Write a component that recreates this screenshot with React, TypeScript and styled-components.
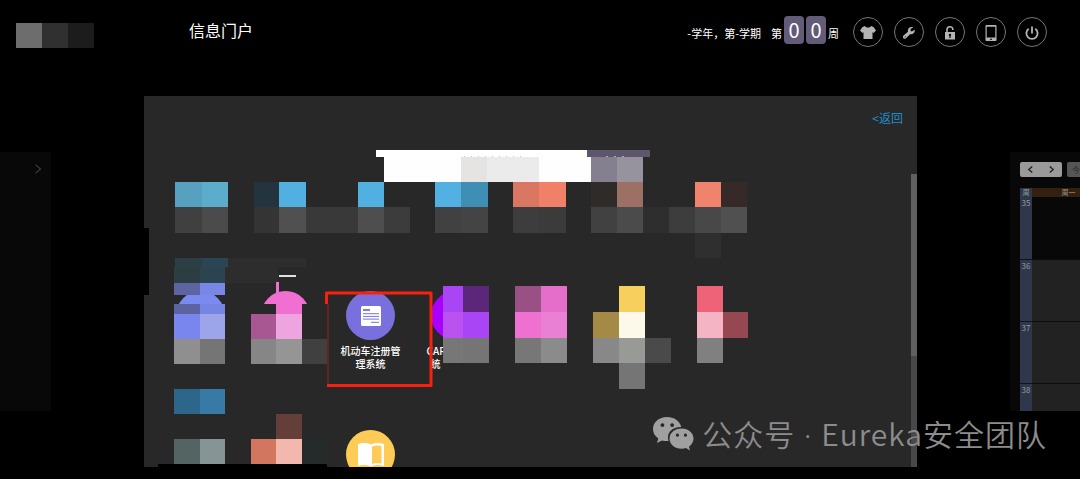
import React from "react";
import styled, { createGlobalStyle } from "styled-components";

const Global = createGlobalStyle`
  * { box-sizing: border-box; }
  body {
    margin: 0;
    background: #000;
    color: #fff;
    font-family: "Noto Sans CJK SC", "Noto Sans", sans-serif;
    overflow-x: hidden;
  }
  button, input { font: inherit; border: 0; padding: 0; margin: 0; }
  a { text-decoration: none; }
`;

const Page = styled.div`
  position: relative;
  min-height: 100vh;
  overflow: hidden;
`;

const Header = styled.header`
  display: flex;
  align-items: center;
  height: 64px;
  margin-bottom: 32px;
  padding: 0 33px 0 16px;
`;

const Logo = styled.svg`
  flex: none;
  margin-top: 7px;
`;

const Title = styled.h1`
  margin: 0 auto 4px 95px;
  font-size: 16px;
  line-height: 24px;
  font-weight: 400;
`;

const Term = styled.div`
  display: flex;
  align-items: center;
  gap: 2px;
  margin-right: 14px;
  font-size: 11px;
  line-height: 16px;
  white-space: nowrap;
`;

const TermText = styled.span<{ $gap?: number }>`
  margin-right: ${(p) => p.$gap ?? 0}px;
  padding-top: 2px;
`;

const Digit = styled.span`
  width: 20px;
  height: 28px;
  margin-bottom: 4px;
  border-radius: 4px;
  background: #625c78;
  font-size: 20px;
  line-height: 28px;
  text-align: center;
`;

const Tools = styled.nav`
  display: flex;
  gap: 11px;
`;

const RoundButton = styled.button`
  display: grid;
  place-items: center;
  width: 30px;
  height: 30px;
  padding-top: 2px;
  border: 1px solid #777;
  border-radius: 50%;
  background: none;
  color: #b4b4b4;
`;

const Main = styled.main`
  display: grid;
  grid-template-columns: 51px minmax(0, 1fr) 70px;
  column-gap: 93px;
  align-items: start;
`;

const SideCard = styled.aside`
  height: 259px;
  margin-top: 56px;
  background: #080808;
  overflow: hidden;
`;

const NextButton = styled.button`
  display: block;
  margin: 12px 8px 0 auto;
  background: none;
  color: #3c3c3c;
  line-height: 0;
`;

const Panel = styled.section`
  position: relative;
  height: 371px;
  background: #282828;
  overflow: hidden;
`;

const BackRow = styled.div`
  display: flex;
  justify-content: flex-end;
  padding: 13px 14px 0 0;
  height: 54px;
`;

const BackLink = styled.a`
  color: #1f8fc9;
  font-size: 12px;
  line-height: 18px;
`;

const Search = styled.form`
  display: flex;
  margin-left: 232px;
  height: 30px;
`;

const SearchInput = styled.input`
  width: 211px;
  background: #fff;
`;

const SearchButton = styled.button`
  width: 63px;
  background: #5d566c;
`;

const Tiles = styled.div`
  display: grid;
  grid-template-columns: repeat(4, 85px);
  grid-auto-rows: 139px;
  margin: 111px 0 0 14px;
`;

const Tile = styled.a`
  display: flex;
  flex-direction: column;
  align-items: center;
  gap: 4px;
  color: #fff;
`;

const Disc = styled.span<{ $color: string }>`
  display: grid;
  place-items: center;
  width: 49px;
  height: 49px;
  border-radius: 50%;
  background: ${(p) => p.$color};
`;

const TileName = styled.span<{ $start?: boolean }>`
  width: 60px;
  padding-left: ${(p) => (p.$start ? 5 : 0)}px;
  font-size: 10px;
  line-height: 13px;
  font-weight: 500;
  text-align: ${(p) => (p.$start ? "left" : "center")};
  text-indent: ${(p) => (p.$start ? -4 : 0)}px;
`;

const Overlay = styled.svg`
  position: absolute;
  left: 0;
  top: 0;
`;

const ScrollTrack = styled.div`
  position: absolute;
  right: 0;
  top: 78px;
  bottom: 0;
  width: 6px;
  background: #484848;
`;

const ScrollThumb = styled.div`
  height: 182px;
  background: #606060;
`;

const CalendarCard = styled(SideCard)`
  padding: 10px 0 0 10px;
`;

const CalendarBar = styled.div`
  display: flex;
  gap: 5px;
  margin-bottom: 11px;
`;

const CalendarNav = styled.div`
  display: flex;
  flex: none;
  width: 42px;
  border-radius: 2px;
  background: #9a9a9a;
`;

const CalendarButton = styled.button`
  display: grid;
  place-items: center;
  flex: 1;
  height: 15px;
  background: none;
  color: #222;
`;

const TodayButton = styled(CalendarButton)`
  justify-items: end;
  border-radius: 2px 0 0 2px;
  background: #565656;
  color: #2a2a2a;
  font-size: 8px;
  line-height: 15px;
`;

const CalendarTable = styled.table`
  width: 100px;
  border-collapse: collapse;
  table-layout: fixed;
  font-size: 8px;
  line-height: 9px;
`;

const WeekHead = styled.th<{ $day?: boolean }>`
  width: ${(p) => (p.$day ? 88 : 12)}px;
  height: 9px;
  padding: 0 ${(p) => (p.$day ? 15 : 0)}px 0 0;
  background: ${(p) => (p.$day ? "#35200f" : "#2b3b48")};
  color: #9a9a9a;
  font-size: 7px;
  font-weight: 400;
`;

const WeekNo = styled.th`
  height: 62px;
  padding: 1px 0 0;
  border-bottom: 1px solid #10151c;
  background: #2e374b;
  color: #9a9a9a;
  font-weight: 400;
  vertical-align: top;
`;

const DayCell = styled.td<{ $dark?: boolean }>`
  padding: 0;
  border-bottom: 1px solid #0c0c0c;
  background: ${(p) => (p.$dark ? "#080808" : "#222")};
`;

const Watermark = styled.div`
  position: absolute;
  right: 33px;
  bottom: 22px;
  display: flex;
  align-items: center;
  gap: 8px;
  color: #8c8c8c;
  font-size: 30px;
  line-height: 44px;
  font-weight: 350;
  letter-spacing: 1px;
  white-space: nowrap;
`;

const Dot = styled.span`
  font-family: "Noto Sans", sans-serif;
  white-space: pre;
`;

type Block = [number, number, number, number, string];

/* x, y, width, height, colour of each covered patch, in panel coordinates */
const BLOCKS: Block[] = [
  [0, 132, 5, 67, "#000"],
  [14, 368, 169, 3, "#000"],
  [232, 61, 8, 25, "#282828"],
  [499, 61, 7, 25, "#282828"],
  [240, 61, 207, 25, "#fefefe"],
  [317, 61, 26, 25, "#e5e4e2"],
  [343, 61, 52, 25, "#ebebeb"],
  [447, 61, 26, 25, "#858090"],
  [473, 61, 26, 25, "#96929e"],
  [31, 86, 27, 25, "#58a0c0"],
  [58, 86, 26, 25, "#5cadcc"],
  [110, 86, 25, 25, "#24343e"],
  [135, 86, 27, 25, "#52b0e0"],
  [214, 86, 26, 25, "#52b0e0"],
  [291, 86, 26, 25, "#52b0e2"],
  [317, 86, 27, 25, "#3f8fb5"],
  [369, 86, 26, 25, "#d97762"],
  [395, 86, 27, 25, "#f08068"],
  [447, 86, 26, 25, "#2f2b28"],
  [473, 86, 26, 25, "#9c7064"],
  [551, 86, 26, 25, "#f0836b"],
  [577, 86, 26, 25, "#352a28"],
  [31, 111, 27, 26, "#404040"],
  [58, 111, 26, 26, "#4b4b4b"],
  [110, 111, 25, 26, "#343434"],
  [135, 111, 27, 26, "#505050"],
  [162, 111, 52, 26, "#393939"],
  [214, 111, 26, 26, "#4e4e4e"],
  [240, 111, 26, 26, "#3c3c3c"],
  [291, 111, 26, 26, "#414141"],
  [317, 111, 27, 26, "#444"],
  [369, 111, 26, 26, "#3d3d3d"],
  [395, 111, 27, 26, "#3b3b3b"],
  [447, 111, 26, 26, "#414141"],
  [473, 111, 26, 26, "#4b4b4b"],
  [499, 111, 26, 26, "#2e2e2e"],
  [525, 111, 26, 26, "#3d3d3d"],
  [551, 111, 26, 26, "#484848"],
  [577, 111, 26, 26, "#505050"],
  [551, 137, 26, 25, "#2f2f2f"],
  [31, 162, 27, 9, "#2d3f46"],
  [58, 162, 26, 9, "#2b4554"],
  [84, 162, 78, 9, "#2d2d2d"],
  [30, 171, 26, 16, "#2c3e42"],
  [56, 171, 25, 16, "#2c4450"],
  [81, 171, 53, 16, "#2d2d2d"],
  [30, 187, 26, 12, "#5c65a2"],
  [56, 187, 25, 12, "#7886e6"],
  [135, 179, 17, 2, "#e2e2de"],
  [132, 186, 3, 22, "#f06fd0"],
  [30, 208, 26, 10, "#5b63a0"],
  [56, 208, 25, 10, "#7785e2"],
  [81, 208, 5, 40, "#282828"],
  [107, 208, 25, 10, "#282828"],
  [132, 208, 26, 10, "#f06fd0"],
  [158, 208, 12, 34, "#282828"],
  [30, 218, 26, 25, "#7886ee"],
  [56, 218, 25, 25, "#9ca5ea"],
  [107, 218, 25, 25, "#a85793"],
  [132, 218, 26, 25, "#eea4de"],
  [30, 243, 26, 25, "#8f8f8f"],
  [56, 243, 25, 25, "#757575"],
  [107, 243, 25, 25, "#868686"],
  [132, 243, 26, 25, "#959595"],
  [158, 243, 25, 25, "#404040"],
  [299, 190, 20, 26, "#a945f5"],
  [319, 190, 26, 26, "#5c267a"],
  [299, 216, 20, 26, "#b952ef"],
  [319, 216, 26, 26, "#a945f5"],
  [299, 242, 20, 25, "#777"],
  [319, 242, 26, 25, "#757575"],
  [371, 190, 26, 26, "#985085"],
  [397, 190, 26, 26, "#e66ecb"],
  [371, 216, 26, 26, "#ee70d0"],
  [397, 216, 26, 26, "#ea80d4"],
  [371, 242, 26, 25, "#777"],
  [397, 242, 26, 25, "#8b8b8b"],
  [475, 190, 26, 26, "#f7cf5c"],
  [449, 216, 26, 26, "#a58a45"],
  [475, 216, 26, 26, "#fcf9ea"],
  [449, 242, 26, 25, "#888"],
  [475, 242, 26, 25, "#979a95"],
  [501, 242, 26, 25, "#4a4a4a"],
  [475, 267, 26, 26, "#757575"],
  [553, 190, 26, 26, "#ef6378"],
  [553, 216, 26, 26, "#f5b4c3"],
  [579, 216, 25, 26, "#954852"],
  [553, 242, 26, 25, "#808080"],
  [30, 293, 26, 25, "#2d668b"],
  [56, 293, 25, 25, "#367aa5"],
  [132, 318, 26, 25, "#643f39"],
  [30, 343, 26, 25, "#536463"],
  [56, 343, 25, 25, "#879496"],
  [107, 343, 25, 25, "#d3765f"],
  [132, 343, 26, 25, "#f3b8ad"],
  [158, 343, 25, 25, "#252a2b"],
];

const ShirtIcon = () => (
  <svg width="18" height="16" viewBox="0 0 18 16" fill="currentColor" aria-hidden="true">
    <path d="M6 1 C7 3 11 3 12 1 L14.500 2 L17 5.500 L14.500 8 L13.500 7.300 V14 H4.500 V7.300 L3.500 8 L1 5.500 L3.500 2 Z" />
  </svg>
);

const WrenchIcon = () => (
  <svg width="14" height="14" viewBox="0 0 14 14" aria-hidden="true">
    <path
      d="M12.600 3.800 L9.800 5.500 L8.500 4.700 L8.600 3 L11.200 1.400 C9 .4 6.300 1.600 5.900 4 C5.800 4.700 5.800 5.200 6 5.700 L1.500 9.600 C-.2 11.400 2 13.900 4 12.300 L8.100 8.200 C11 8.600 13.400 6.600 12.600 3.800 Z M2.900 10.300 a.6 .6 0 1 1 -.1 1.100 Z"
      fill="currentColor"
      fillRule="evenodd"
    />
  </svg>
);

const LockIcon = () => (
  <svg width="14" height="16" viewBox="0 0 14 16" aria-hidden="true">
    <path d="M4 7 V4.500 a3 3 0 0 1 5.800 -.8 V5" fill="none" stroke="currentColor" strokeWidth="1.600" />
    <path
      d="M2 7 H12 V14.500 H2 Z M7 8.700 a1.300 1.300 0 0 0 -.6 2.400 V13 H7.600 V11.100 A1.300 1.300 0 0 0 7 8.700 Z"
      fill="currentColor"
      fillRule="evenodd"
    />
  </svg>
);

const PhoneIcon = () => (
  <svg width="12" height="18" viewBox="0 0 12 18" aria-hidden="true">
    <path
      d="M1.500 1 H10.500 Q11.500 1 11.500 2 V16 Q11.500 17 10.500 17 H1.500 Q.5 17 .5 16 V2 Q.5 1 1.500 1 Z M1.700 2.800 V13.600 H10.300 V2.800 Z M5 14.700 V15.800 H7 V14.700 Z"
      fill="currentColor"
      fillRule="evenodd"
    />
  </svg>
);

const PowerIcon = () => (
  <svg width="16" height="16" viewBox="0 0 16 16" fill="none" stroke="currentColor" strokeWidth="1.800" aria-hidden="true">
    <path d="M4.700 3.800 A5.600 5.600 0 1 0 11.300 3.800 M8 1.500 V8.500" />
  </svg>
);

const Chevron = ({ left = false, size = 7, weight = 1.5 }: { left?: boolean; size?: number; weight?: number }) => (
  <svg width={size} height={size} viewBox="0 0 8 8" fill="none" stroke="currentColor" strokeWidth={weight} aria-hidden="true">
    <path d={left ? "M6 .5 L2 4 L6 7.500" : "M2 .5 L6 4 L2 7.500"} />
  </svg>
);

const DocumentIcon = () => (
  <svg width="20" height="20" viewBox="0 0 20 20" aria-hidden="true">
    <rect width="20" height="20" rx="1.500" fill="#fff" />
    <path d="M2 4 H9" stroke="#7a70dd" strokeWidth="1.800" />
    <path d="M2 7.700 H18 M2 10.400 H18 M2 13.100 H18 M10 16.300 H18" stroke="#7a70dd" strokeWidth="1" />
  </svg>
);

const BookIcon = () => (
  <svg width="26" height="24" viewBox="0 0 26 24" aria-hidden="true">
    <path
      d="M0 1 Q7 -1 13 1.500 Q19 -1 26 1 V23 Q19 21 13 23.500 Q7 21 0 23 Z M14 3.500 V21 Q19 19.500 23.500 20.500 V3 Q19 2 14 3.500 Z"
      fill="#fff"
      fillRule="evenodd"
    />
  </svg>
);

const WeChatIcon = () => (
  <svg width="42" height="36" viewBox="0 0 42 36" aria-hidden="true">
    <path
      d="M15 1 C7 1 1 6.200 1 13 C1 17 3 20.200 6.300 22.500 L5 27 L10 24.500 C12 25 14 25.300 16.500 25 C14 17 20 11 29.200 11 C28 5 22 1 15 1 Z M10.500 7.200 a1.900 1.900 0 1 1 -.1 0 Z M20.200 7.200 a1.900 1.900 0 1 1 -.1 0 Z"
      fill="#a0a0a0"
      fillRule="evenodd"
    />
    <path
      d="M29.500 12.500 C22.500 12.500 17.500 17 17.500 22.500 C17.500 28 22.500 32.700 29.500 32.700 C31.200 32.700 32.700 32.500 34 32 L38 34.500 L37 30.700 C39.700 28.600 41.500 25.800 41.500 22.500 C41.500 17 36.500 12.500 29.500 12.500 Z M25.500 17.600 a1.600 1.600 0 1 1 -.1 0 Z M33.500 17.600 a1.600 1.600 0 1 1 -.1 0 Z"
      fill="#a0a0a0"
      fillRule="evenodd"
    />
  </svg>
);

const TOOLS = [
  { label: "换肤", Icon: ShirtIcon },
  { label: "设置", Icon: WrenchIcon },
  { label: "密码", Icon: LockIcon },
  { label: "手机", Icon: PhoneIcon },
  { label: "退出", Icon: PowerIcon },
];

const WEEKS = [35, 36, 37, 38];

export default function App() {
  return (
    <Page>
      <Global />
      <Header>
        <Logo width="78" height="25" aria-hidden="true">
          <rect width="26" height="25" fill="#6d6d6d" />
          <rect x="26" width="26" height="25" fill="#303030" />
          <rect x="52" width="26" height="25" fill="#1c1c1c" />
        </Logo>
        <Title>信息门户</Title>
        <Term>
          <TermText $gap={8}>-学年，第-学期</TermText>
          <TermText>第</TermText>
          <Digit>0</Digit>
          <Digit>0</Digit>
          <TermText>周</TermText>
        </Term>
        <Tools>
          {TOOLS.map(({ label, Icon }) => (
            <RoundButton key={label} type="button" aria-label={label}>
              <Icon />
            </RoundButton>
          ))}
        </Tools>
      </Header>

      <Main>
        <SideCard>
          <NextButton type="button" aria-label="下一页">
            <Chevron size={10} weight={1} />
          </NextButton>
        </SideCard>

        <Panel>
          <BackRow>
            <BackLink href="#">&lt;返回</BackLink>
          </BackRow>
          <Search>
            <SearchInput type="text" aria-label="搜索" />
            <SearchButton type="button" aria-label="搜索" />
          </Search>
          <Tiles>
            <Tile href="#" aria-label="应用">
              <Disc $color="#7b8af0" />
            </Tile>
            <Tile href="#" aria-label="应用">
              <Disc $color="#f06fd0" />
            </Tile>
            <Tile href="#">
              <Disc $color="#7a70dd">
                <DocumentIcon />
              </Disc>
              <TileName>机动车注册管理系统</TileName>
            </Tile>
            <Tile href="#">
              <Disc $color="#a800ff" />
              <TileName $start>
                CAR
                <br />统
              </TileName>
            </Tile>
            <span />
            <span />
            <Tile href="#" aria-label="图书">
              <Disc $color="#ffcb57">
                <BookIcon />
              </Disc>
            </Tile>
          </Tiles>
          <Overlay width="772" height="371" aria-hidden="true">
            {BLOCKS.map(([x, y, w, h, fill]) => (
              <rect key={`${x}-${y}-${w}`} x={x} y={y} width={w} height={h} fill={fill} />
            ))}
            <path d="M320 60.500 H382" stroke="#ccc" strokeDasharray="1 6" />
            <path d="M462 60.500 H483" stroke="#aaa" strokeDasharray="2 6" />
            <path d="M184 208 V290" stroke="#a01c1c" />
            <path
              d="M182.500 208 V197 H287 V289.500 H183"
              fill="none"
              stroke="#f9200f"
              strokeWidth="3"
              strokeLinejoin="round"
            />
          </Overlay>
          <ScrollTrack>
            <ScrollThumb />
          </ScrollTrack>
        </Panel>

        <CalendarCard>
          <CalendarBar>
            <CalendarNav>
              <CalendarButton type="button" aria-label="上一周">
                <Chevron left />
              </CalendarButton>
              <CalendarButton type="button" aria-label="下一周">
                <Chevron />
              </CalendarButton>
            </CalendarNav>
            <TodayButton type="button">今</TodayButton>
          </CalendarBar>
          <CalendarTable>
            <thead>
              <tr>
                <WeekHead>周</WeekHead>
                <WeekHead $day>周一</WeekHead>
              </tr>
            </thead>
            <tbody>
              {WEEKS.map((week, i) => (
                <tr key={week}>
                  <WeekNo scope="row">{week}</WeekNo>
                  <DayCell $dark={i === 0} />
                </tr>
              ))}
            </tbody>
          </CalendarTable>
        </CalendarCard>
      </Main>

      <Watermark>
        <WeChatIcon />
        <span>
          公众号<Dot> · </Dot>Eureka安全团队
        </span>
      </Watermark>
    </Page>
  );
}
